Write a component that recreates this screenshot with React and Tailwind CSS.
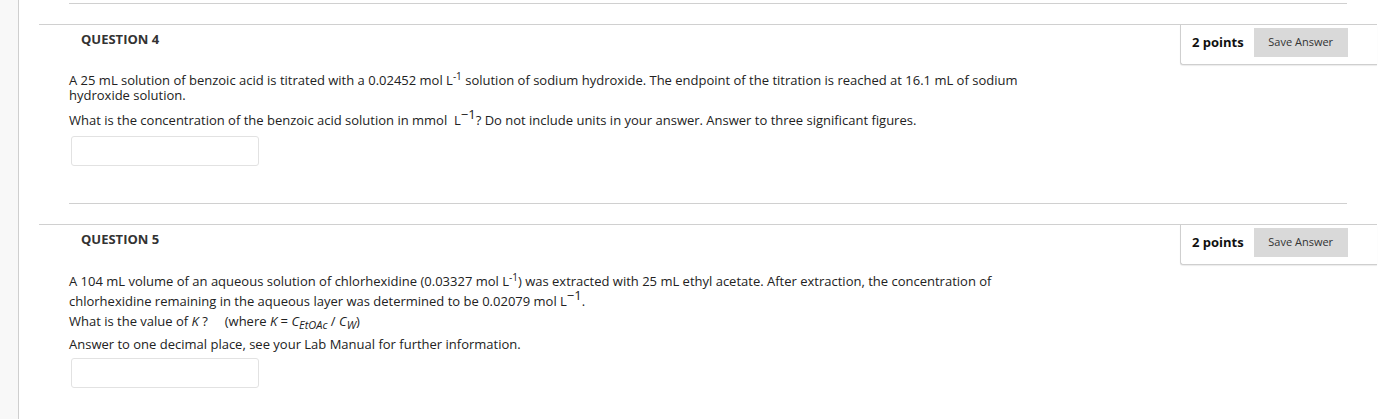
import React from "react";

const FONT = { fontFamily: '"Open Sans", "Liberation Sans", sans-serif' };

function PointsBox() {
  return (
    <div className="flex h-[40px] w-[197px] items-start border-b border-l border-[#cfcfcf] rounded-bl-[3px] bg-white pl-[11px] pt-[3px] shadow-[0_1px_1px_rgba(0,0,0,0.08)]">
      <span className="mt-[5px] text-[13px] font-bold leading-[18px] text-[#111]">2 points</span>
      <button className="ml-[10px] h-[29px] w-[94px] bg-[#d9d9d9] text-[11px] text-[#333]">
        Save Answer
      </button>
    </div>
  );
}

function Question({ n, children, answerTop }) {
  return (
    <div>
      <div className="flex border-t border-[#d0d0d0]">
        <div className="flex-1 pl-[42px] pt-[5px] text-[13px] font-bold leading-[18px] text-[#333]">
          QUESTION {n}
        </div>
        <PointsBox />
      </div>
      <div className="px-[30px]">
        {children}
        <div className={`${answerTop} ml-[2px] h-[30px] w-[188px] rounded-[3px] border border-[#e2e2e2] bg-white`} />
      </div>
    </div>
  );
}

export default function App() {
  return (
    <div className="flex h-[419px] w-[1395px] overflow-hidden bg-white" style={FONT}>
      <div className="w-[19px] shrink-0 border-r border-[#cfcfcf] bg-[#f8f8f8]" />
      <div className="ml-[20px] w-[1338px]">
        <div className="mx-[30px] mt-[3px] mb-[20px] border-t border-[#d0d0d0]" />

        <Question n={4} answerTop="mt-[8px]">
          <div className="mt-[8px] text-[13px] leading-[15px] text-[#222]">
            <p>
              A 25 mL solution of benzoic acid is titrated with a 0.02452 mol L
              <sup className="text-[10px] leading-none">-1</sup> solution of sodium hydroxide. The
              endpoint of the titration is reached at 16.1 mL of sodium
              <br />
              hydroxide solution.
            </p>
            <p className="mt-[10px]">
              What is the concentration of the benzoic acid solution in mmol&nbsp; L
              <sup className="text-[13px] leading-none">−1</sup>? Do not include units in your
              answer. Answer to three significant figures.
            </p>
          </div>
        </Question>

        <div className="mx-[30px] mt-[37px] mb-[20px] border-t border-[#d0d0d0]" />

        <Question n={5} answerTop="mt-[4px]">
          <div className="mt-[6px] text-[13px] leading-[20px] text-[#222]">
            <p>
              A 104 mL volume of an aqueous solution of chlorhexidine (0.03327 mol L
              <sup className="text-[10px] leading-none">-1</sup>) was extracted with 25 mL ethyl
              acetate. After extraction, the concentration of
              <br />
              chlorhexidine remaining in the aqueous layer was determined to be 0.02079 mol L
              <sup className="text-[13px] leading-none">−1</sup>.
              <br />
              What is the value of <i>K</i> ?&nbsp;&nbsp;&nbsp;&nbsp; (where <i>K</i> ={" "}
              <i>
                C<sub className="text-[11px] leading-none">EtOAc</sub>
              </i>{" "}
              /{" "}
              <i>
                C<sub className="text-[11px] leading-none">W</sub>
              </i>
              )
            </p>
            <p className="mt-[3px]">
              Answer to one decimal place, see your Lab Manual for further information.
            </p>
          </div>
        </Question>
      </div>
    </div>
  );
}
